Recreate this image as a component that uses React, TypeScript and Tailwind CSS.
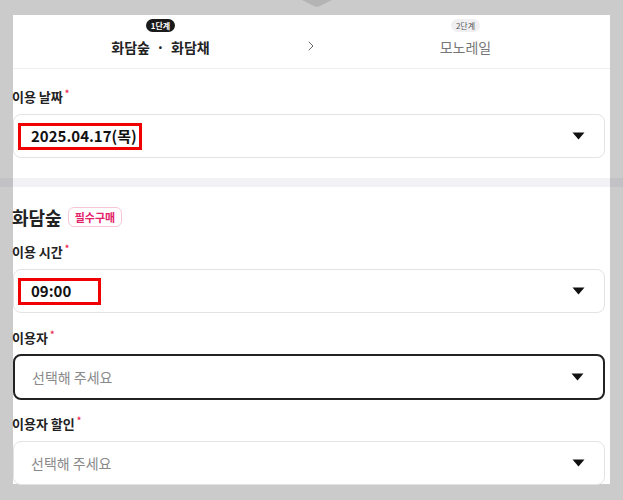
import { ChevronRight } from 'lucide-react';

const KR = "font-['Noto_Sans_CJK_KR','Noto_Sans',sans-serif]";

function Caret() {
  return (
    <svg width="13" height="8" viewBox="0 0 13 8" className="shrink-0">
      <path d="M0.5 0.5 H12.5 L6.5 7.5 Z" fill="#111" />
    </svg>
  );
}

function Label({ text }: { text: string }) {
  return (
    <div className="flex items-start gap-[2px] text-[13px] font-semibold leading-[18px] text-[#222]">
      {text}
      <span className="text-[9px] leading-[12px] text-[#e8264f]">*</span>
    </div>
  );
}

function SelectBox({
  value,
  placeholder,
  focused,
  boxWidth,
}: {
  value?: string;
  placeholder?: string;
  focused?: boolean;
  boxWidth?: string;
}) {
  return (
    <div
      className={`flex items-center justify-between rounded-[8px] bg-white pr-[19px] ${
        focused ? 'h-[46px] border-2 border-[#222]' : 'h-[44px] border border-[#e3e3e6]'
      }`}
    >
      {value ? (
        <div
          className={`ml-[4px] flex h-[27px] items-center border-[3px] border-[#f00000] pl-[10px] text-[15px] font-bold text-[#111] ${boxWidth}`}
        >
          {value}
        </div>
      ) : (
        <div className="pl-[17px] text-[14px] text-[#8a8a8a]">{placeholder}</div>
      )}
      <Caret />
    </div>
  );
}

export default function App() {
  return (
    <div className={`relative h-[500px] w-[623px] overflow-hidden bg-[#cbcbcb] ${KR}`}>
      {/* dimmed arrow tip at top */}
      <svg width="30" height="8" viewBox="0 0 30 8" className="absolute left-[302px] top-0">
        <path d="M0 0 H30 L18 6 Q15 7.5 12 6 Z" fill="#b4b4b4" />
      </svg>

      <div className="mx-[13px] mt-[15px] h-[469px] bg-white">
        {/* steps header */}
        <div className="flex h-[54px] border-b border-[#efeff1]">
          <div className="flex flex-1 flex-col items-center pt-[4px] pl-[3px]">
            <span className="flex h-[13px] items-center rounded-full bg-[#1a1a1a] px-[5px] text-[8px] font-bold text-white">
              1단계
            </span>
            <span className="mt-[6px] whitespace-pre text-[14px] font-bold leading-[18px] text-[#222]">
              {'화담숲  ·  화담채'}
            </span>
          </div>
          <div className="flex w-0 items-center justify-center pt-[8px] pl-[6px]">
            <ChevronRight size={16} strokeWidth={1.5} className="shrink-0 text-[#666]" />
          </div>
          <div className="flex flex-1 flex-col items-center pt-[4px] pl-[10px]">
            <span className="flex h-[13px] items-center rounded-full bg-[#f0f0f3] px-[5px] text-[8px] text-[#555]">
              2단계
            </span>
            <span className="mt-[6px] text-[14px] leading-[18px] text-[#777]">모노레일</span>
          </div>
        </div>

        {/* date */}
        <div className="-ml-[1px] pt-[19px] pb-[20px]">
          <Label text="이용 날짜" />
          <div className="mt-[8px] ml-[1px] mr-[5px]">
            <SelectBox value="2025.04.17(목)" boxWidth="w-[124px]" />
          </div>
        </div>

        <div className="-mx-[13px] h-[9px] bg-[linear-gradient(to_right,#c2c2c6_13px,#f2f2f6_13px,#f2f2f6_610px,#c2c2c6_610px)]" />

        {/* 화담숲 section */}
        <div className="-ml-[1px] pt-[18px]">
          <div className="flex items-center gap-[6px]">
            <span className="text-[18px] font-bold leading-[24px] text-[#222]">화담숲</span>
            <span className="flex h-[20px] items-center rounded-[6px] border border-[#f6c6d6] px-[6px] text-[11px] font-bold text-[#e2236a]">
              필수구매
            </span>
          </div>

          <div className="mt-[14px]">
            <Label text="이용 시간" />
          </div>
          <div className="mt-[8px] ml-[1px] mr-[5px]">
            <SelectBox value="09:00" boxWidth="w-[83px]" />
          </div>

          <div className="mt-[16px]">
            <Label text="이용자" />
          </div>
          <div className="mt-[7px] ml-[1px] mr-[5px]">
            <SelectBox placeholder="선택해 주세요" focused />
          </div>

          <div className="mt-[15px]">
            <Label text="이용자 할인" />
          </div>
          <div className="mt-[8px] ml-[1px] mr-[5px]">
            <SelectBox placeholder="선택해 주세요" />
          </div>
        </div>
      </div>
    </div>
  );
}
